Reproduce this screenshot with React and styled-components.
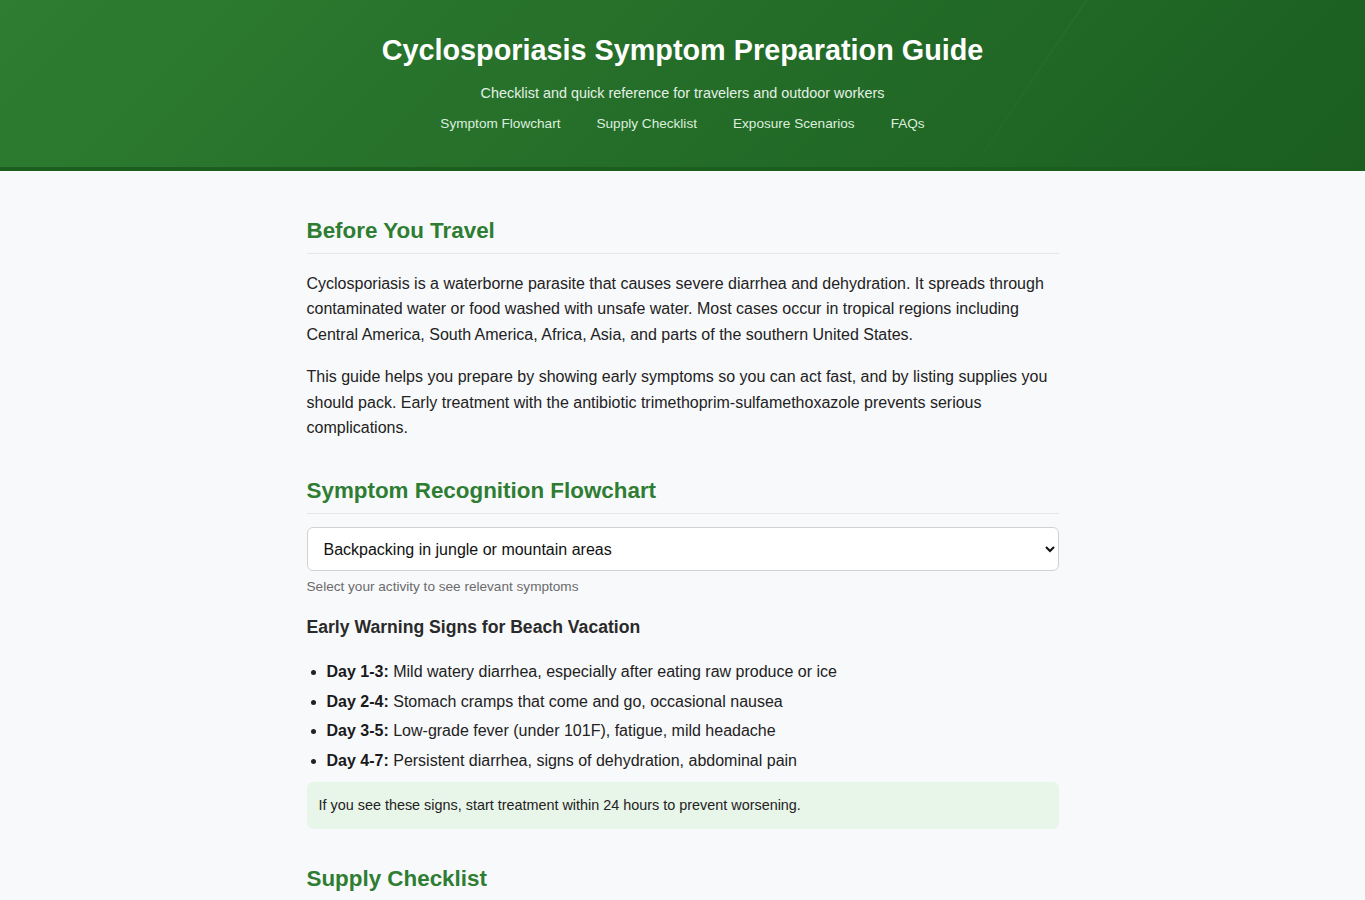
import React, { useState } from 'react';
import styled, { createGlobalStyle } from 'styled-components';

const FONT = '"Liberation Sans", Arial, sans-serif';

const GlobalStyle = createGlobalStyle`
  html, body {
    margin: 0;
    padding: 0;
    background: #f8f9fb;
    font-family: ${FONT};
    color: #222;
  }
  * {
    box-sizing: border-box;
  }
`;

const Header = styled.header`
  position: relative;
  overflow: hidden;
  background: linear-gradient(135deg, #2e7d32 0%, #1b5e20 100%);
  border-bottom: 4px solid #1b5e20;
  padding: 34px 20px 35px;
  text-align: center;
  color: #fff;
`;

/* faint diagonal streak across the banner */
const Streak = styled.span`
  position: absolute;
  top: -4px;
  left: 1088px;
  width: 2px;
  height: 190px;
  background: linear-gradient(rgba(255, 255, 255, 0.03), rgba(255, 255, 255, 0.01));
  transform: rotate(34deg);
  transform-origin: top left;
`;

const Title = styled.h1`
  position: relative;
  margin: 0;
  font-size: 28.8px;
  line-height: 33px;
  font-weight: 700;
`;

const Subtitle = styled.p`
  position: relative;
  margin: 18px 0 0;
  font-size: 14.4px;
  line-height: 16.5px;
  color: #e3f1e4;
`;

const Nav = styled.nav`
  position: relative;
  display: flex;
  justify-content: center;
  gap: 36px;
  margin-top: 14px;
`;

const NavLink = styled.a`
  font-size: 13.6px;
  line-height: 16px;
  color: #dcefdd;
  text-decoration: none;
`;

const Main = styled.main`
  max-width: 800px;
  margin: 0 auto;
  padding: 47px 24px 40px;
`;

const Section = styled.section`
  & + & {
    margin-top: 37px;
  }
`;

const SectionTitle = styled.h2`
  margin: 0 0 ${props => props.$gap || 17}px;
  padding-bottom: 9px;
  border-bottom: 1px solid #e4e7ea;
  font-size: 22.4px;
  line-height: 26px;
  font-weight: 700;
  color: #2e7d32;
`;

const Paragraph = styled.p`
  margin: 0;
  font-size: 16px;
  line-height: 25.6px;
  color: #222;

  & + & {
    margin-top: 17px;
  }
`;

const Select = styled.select`
  display: block;
  width: 100%;
  height: 44px;
  padding: 0 12px;
  font-family: ${FONT};
  font-size: 16px;
  color: #111;
  background: #fff;
  border: 1px solid #cfd3d7;
  border-radius: 6px;
`;

const Hint = styled.div`
  margin-top: 8px;
  font-size: 13.6px;
  line-height: 16px;
  color: #6b6b6b;
`;

const SubTitle = styled.h3`
  margin: 22px 0 22px;
  font-size: 17.6px;
  line-height: 20px;
  font-weight: 700;
  color: #2a2a2a;
`;

const List = styled.ul`
  margin: 0 0 9px;
  padding-left: 20px;
`;

const Item = styled.li`
  font-size: 16px;
  line-height: 25.6px;
  color: #222;

  & + & {
    margin-top: 4px;
  }

  strong {
    color: #1a1a1a;
  }
`;

const Callout = styled.div`
  padding: 12px;
  background: #e8f5e9;
  border-radius: 6px;
  font-size: 14.4px;
  line-height: 23px;
  color: #222;
`;

const activities = [
  'Backpacking in jungle or mountain areas',
  'Beach vacation',
  'Farm or agricultural work',
  'City travel and restaurants',
];

const warnings = [
  ['Day 1-3:', 'Mild watery diarrhea, especially after eating raw produce or ice'],
  ['Day 2-4:', 'Stomach cramps that come and go, occasional nausea'],
  ['Day 3-5:', 'Low-grade fever (under 101F), fatigue, mild headache'],
  ['Day 4-7:', 'Persistent diarrhea, signs of dehydration, abdominal pain'],
];

export default function App() {
  const [activity, setActivity] = useState(activities[0]);

  return (
    <>
      <GlobalStyle />
      <Header>
        <Streak />
        <Title>Cyclosporiasis Symptom Preparation Guide</Title>
        <Subtitle>Checklist and quick reference for travelers and outdoor workers</Subtitle>
        <Nav>
          <NavLink href="#flowchart">Symptom Flowchart</NavLink>
          <NavLink href="#supplies">Supply Checklist</NavLink>
          <NavLink href="#scenarios">Exposure Scenarios</NavLink>
          <NavLink href="#faqs">FAQs</NavLink>
        </Nav>
      </Header>

      <Main>
        <Section>
          <SectionTitle>Before You Travel</SectionTitle>
          <Paragraph>
            Cyclosporiasis is a waterborne parasite that causes severe diarrhea and dehydration. It
            spreads through contaminated water or food washed with unsafe water. Most cases occur in
            tropical regions including Central America, South America, Africa, Asia, and parts of the
            southern United States.
          </Paragraph>
          <Paragraph>
            This guide helps you prepare by showing early symptoms so you can act fast, and by listing
            supplies you should pack. Early treatment with the antibiotic trimethoprim-sulfamethoxazole
            prevents serious complications.
          </Paragraph>
        </Section>

        <Section id="flowchart">
          <SectionTitle $gap={13}>Symptom Recognition Flowchart</SectionTitle>
          <Select value={activity} onChange={e => setActivity(e.target.value)}>
            {activities.map(a => (
              <option key={a} value={a}>
                {a}
              </option>
            ))}
          </Select>
          <Hint>Select your activity to see relevant symptoms</Hint>
          <SubTitle>Early Warning Signs for Beach Vacation</SubTitle>
          <List>
            {warnings.map(([day, text]) => (
              <Item key={day}>
                <strong>{day}</strong> {text}
              </Item>
            ))}
          </List>
          <Callout>If you see these signs, start treatment within 24 hours to prevent worsening.</Callout>
        </Section>

        <Section id="supplies">
          <SectionTitle>Supply Checklist</SectionTitle>
        </Section>
      </Main>
    </>
  );
}
